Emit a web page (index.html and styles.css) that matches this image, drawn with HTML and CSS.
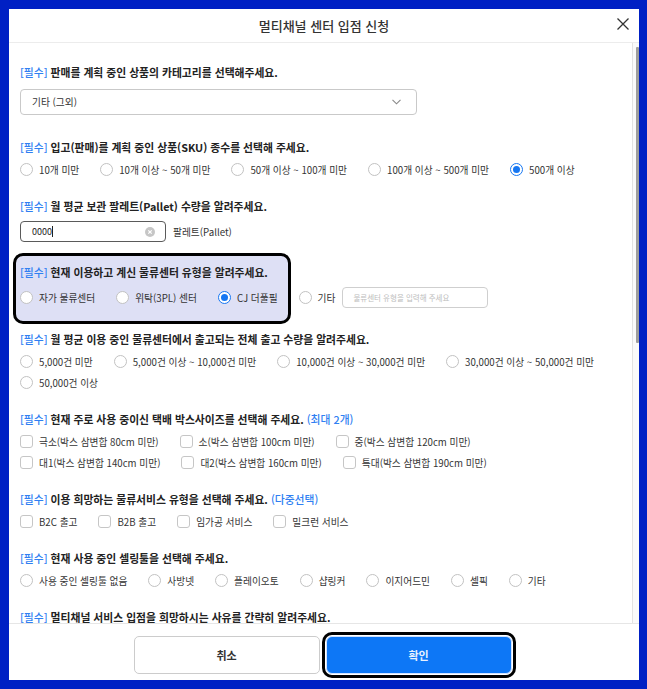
FILE: index.html
```html
<!DOCTYPE html>
<html lang="ko">
<head>
    <meta charset="UTF-8">
    <meta name="viewport" content="width=device-width, initial-scale=1.0">
    <title>멀티채널 센터 입점 신청</title>
    <link rel="stylesheet" href="styles.css">
</head>
<body>
    <div class="dialog">
        <div class="dialog-header">
            <h1>멀티채널 센터 입점 신청</h1>
            <button class="close-btn" aria-label="닫기">
                <svg width="12" height="12" viewBox="0 0 12 12"><path d="M0.5 0.5 L11.5 11.5 M11.5 0.5 L0.5 11.5" stroke="#333" stroke-width="1.3" fill="none"/></svg>
            </button>
        </div>

        <div class="dialog-body">
            <div class="section section-first">
                <p class="q"><span class="req">[필수]</span> 판매를 계획 중인 상품의 카테고리를 선택해주세요.</p>
                <div class="select">
                    <span>기타 (그외)</span>
                    <svg width="9" height="6" viewBox="0 0 9 6"><path d="M0.5 0.8 L4.5 4.8 L8.5 0.8" stroke="#888" stroke-width="1.1" fill="none"/></svg>
                </div>
            </div>

            <div class="section">
                <p class="q"><span class="req">[필수]</span> 입고(판매)를 계획 중인 상품(SKU) 종수를 선택해 주세요.</p>
                <div class="opts">
                    <label class="opt"><span class="radio"></span>10개 미만</label>
                    <label class="opt"><span class="radio"></span>10개 이상 ~ 50개 미만</label>
                    <label class="opt"><span class="radio"></span>50개 이상 ~ 100개 미만</label>
                    <label class="opt"><span class="radio"></span>100개 이상 ~ 500개 미만</label>
                    <label class="opt"><span class="radio on"></span>500개 이상</label>
                </div>
            </div>

            <div class="section section-pallet">
                <p class="q"><span class="req">[필수]</span> 월 평균 보관 팔레트(Pallet) 수량을 알려주세요.</p>
                <div class="pallet-row">
                    <div class="num-input">
                        <span class="value">0000</span><span class="caret"></span>
                        <span class="clear">
                            <svg width="10" height="10" viewBox="0 0 10 10"><circle cx="5" cy="5" r="5" fill="#c6c6c6"/><path d="M3.3 3.3 L6.7 6.7 M6.7 3.3 L3.3 6.7" stroke="#fff" stroke-width="1.2"/></svg>
                        </span>
                    </div>
                    <span class="unit">팔레트(Pallet)</span>
                </div>
            </div>

            <div class="section section-mark">
                <p class="q"><span class="req">[필수]</span> 현재 이용하고 계신 물류센터 유형을 알려주세요.</p>
                <div class="opts opts-center">
                    <label class="opt"><span class="radio"></span>자가 물류센터</label>
                    <label class="opt"><span class="radio"></span>위탁(3PL) 센터</label>
                    <label class="opt"><span class="radio on"></span>CJ 더풀필</label>
                    <label class="opt"><span class="radio"></span>기타
                        <span class="text-input">물류센터 유형을 입력해 주세요</span>
                    </label>
                </div>
            </div>

            <div class="section">
                <p class="q"><span class="req">[필수]</span> 월 평균 이용 중인 물류센터에서 출고되는 전체 출고 수량을 알려주세요.</p>
                <div class="opts">
                    <label class="opt"><span class="radio"></span>5,000건 미만</label>
                    <label class="opt"><span class="radio"></span>5,000건 이상 ~ 10,000건 미만</label>
                    <label class="opt"><span class="radio"></span>10,000건 이상 ~ 30,000건 미만</label>
                    <label class="opt"><span class="radio"></span>30,000건 이상 ~ 50,000건 미만</label>
                    <label class="opt"><span class="radio"></span>50,000건 이상</label>
                </div>
            </div>

            <div class="section">
                <p class="q"><span class="req">[필수]</span> 현재 주로 사용 중이신 택배 박스사이즈를 선택해 주세요. <span class="req">(최대 2개)</span></p>
                <div class="opts">
                    <label class="opt"><span class="check"></span>극소(박스 삼변합 80cm 미만)</label>
                    <label class="opt"><span class="check"></span>소(박스 삼변합 100cm 미만)</label>
                    <label class="opt"><span class="check"></span>중(박스 삼변합 120cm 미만)</label>
                </div>
                <div class="opts">
                    <label class="opt"><span class="check"></span>대1(박스 삼변합 140cm 미만)</label>
                    <label class="opt"><span class="check"></span>대2(박스 삼변합 160cm 미만)</label>
                    <label class="opt"><span class="check"></span>특대(박스 삼변합 190cm 미만)</label>
                </div>
            </div>

            <div class="section">
                <p class="q"><span class="req">[필수]</span> 이용 희망하는 물류서비스 유형을 선택해 주세요. <span class="req">(다중선택)</span></p>
                <div class="opts">
                    <label class="opt"><span class="check"></span>B2C 출고</label>
                    <label class="opt"><span class="check"></span>B2B 출고</label>
                    <label class="opt"><span class="check"></span>임가공 서비스</label>
                    <label class="opt"><span class="check"></span>밀크런 서비스</label>
                </div>
            </div>

            <div class="section">
                <p class="q"><span class="req">[필수]</span> 현재 사용 중인 셀링툴을 선택해 주세요.</p>
                <div class="opts">
                    <label class="opt"><span class="radio"></span>사용 중인 셀링툴 없음</label>
                    <label class="opt"><span class="radio"></span>사방넷</label>
                    <label class="opt"><span class="radio"></span>플레이오토</label>
                    <label class="opt"><span class="radio"></span>샵링커</label>
                    <label class="opt"><span class="radio"></span>이지어드민</label>
                    <label class="opt"><span class="radio"></span>셀픽</label>
                    <label class="opt"><span class="radio"></span>기타</label>
                </div>
            </div>

            <div class="section">
                <p class="q"><span class="req">[필수]</span> 멀티채널 서비스 입점을 희망하시는 사유를 간략히 알려주세요.</p>
            </div>

            <!-- scrollbar drawn over the body -->
            <div class="scrollbar"><div class="thumb"></div></div>
        </div>

        <div class="dialog-footer">
            <button class="btn btn-cancel">취소</button>
            <button class="btn btn-confirm">확인</button>
        </div>
    </div>
</body>
</html>
```

FILE: styles.css
```css
* {
    box-sizing: border-box;
}

body {
    margin: 0;
    padding: 9px 8px 9px 9px;
    height: 689px;
    background: #0020c4;
    font-family: 'Noto Sans CJK KR', 'Noto Sans', sans-serif;
    color: #222;
    overflow: hidden;
}

.dialog {
    width: 630px;
    height: 671px;
    background: #ffffff;
    display: flex;
    flex-direction: column;
    overflow: hidden;
}

.dialog-header {
    height: 34px;
    flex-shrink: 0;
    display: flex;
    align-items: center;
    justify-content: center;
    position: relative;
    border-bottom: 1px solid #ececec;
}

.dialog-header h1 {
    margin: 0;
    font-size: 13px;
    font-weight: 500;
    color: #333;
}

.close-btn {
    position: absolute;
    right: 10px;
    top: 9px;
    width: 12px;
    height: 12px;
    padding: 0;
    border: none;
    background: none;
    display: flex;
}

.dialog-body {
    flex: 1;
    position: relative;
    overflow: hidden;
    padding: 21px 14px 0 11px;
}

.scrollbar {
    position: absolute;
    top: 0;
    right: 0;
    bottom: 0;
    width: 7px;
    border-left: 1px solid #e2e2e2;
    background: #fafafa;
}

.scrollbar .thumb {
    position: absolute;
    right: 0;
    top: 4px;
    width: 3px;
    height: 296px;
    background: #9d9d9d;
    border-radius: 1px;
}

.section {
    margin-bottom: 18px;
}

.section-first {
    margin-bottom: 24px;
}

.section-pallet {
    margin-bottom: 22px;
}

.q {
    margin: 0 0 4px;
    font-size: 10.8px;
    line-height: 16px;
    font-weight: 700;
    color: #222;
    white-space: nowrap;
}

.req {
    color: #2f7ff2;
    font-weight: 500;
}

.opts {
    display: flex;
    flex-wrap: wrap;
    column-gap: 21px;
}

.opt {
    height: 21px;
    display: flex;
    align-items: center;
    gap: 6px;
    font-size: 9.7px;
    color: #333;
    white-space: nowrap;
}

.radio {
    width: 13px;
    height: 13px;
    border: 1px solid #c2c2c2;
    border-radius: 50%;
    background: #fff;
    display: flex;
    align-items: center;
    justify-content: center;
}

.radio.on {
    border-color: #1677f2;
}

.radio.on::after {
    content: '';
    width: 7px;
    height: 7px;
    border-radius: 50%;
    background: #1677f2;
}

.check {
    width: 13px;
    height: 13px;
    border: 1px solid #c6c6c6;
    border-radius: 3px;
    background: #fff;
}

.select {
    margin-top: 9px;
    width: 397px;
    height: 26px;
    border: 1px solid #c9c9c9;
    border-radius: 4px;
    display: flex;
    align-items: center;
    justify-content: space-between;
    padding: 0 15px 0 11px;
    font-size: 9.7px;
    color: #333;
}

.pallet-row {
    margin-top: 7px;
    display: flex;
    align-items: center;
    gap: 7px;
}

.num-input {
    width: 146px;
    height: 21px;
    border: 1px solid #5a5a5a;
    border-radius: 4px;
    display: flex;
    align-items: center;
    padding: 0 10px 0 11px;
    font-size: 9px;
    color: #222;
}

.caret {
    width: 1px;
    height: 11px;
    background: #222;
}

.clear {
    margin-left: auto;
    display: flex;
}

.unit {
    font-size: 9.7px;
    color: #333;
}

/* highlighted question */
.section-mark {
    position: relative;
    z-index: 0;
    margin-bottom: 23px;
}

.section-mark::before {
    content: '';
    position: absolute;
    left: -7px;
    top: -11px;
    width: 272px;
    height: 65px;
    background: #dee0f5;
    border: 3px solid #000;
    border-radius: 10px;
    z-index: -1;
}

.opts-center {
    padding-top: 3px;
}

.text-input {
    margin-left: 1px;
    width: 146px;
    height: 21px;
    border: 1px solid #cfcfcf;
    border-radius: 4px;
    display: flex;
    align-items: center;
    padding-left: 10px;
    font-size: 7.5px;
    color: #bdbdbd;
}

.dialog-footer {
    height: 57px;
    flex-shrink: 0;
    border-top: 1px solid #e6e6e6;
    display: flex;
    justify-content: center;
    gap: 6px;
    padding: 12px 3px 0 0;
}

.btn {
    width: 186px;
    height: 38px;
    border-radius: 5px;
    font-family: inherit;
    font-size: 11px;
    font-weight: 700;
    cursor: pointer;
}

.btn-cancel {
    background: #fff;
    border: 1px solid #cccccc;
    color: #333;
}

.btn-confirm {
    background: #0d77f6;
    border: 1px solid #cfe2ff;
    color: #e8f1ff;
    box-shadow: 0 0 0 1px #ffffff, 0 0 0 4px #000000;
    border-radius: 6px;
}
```
